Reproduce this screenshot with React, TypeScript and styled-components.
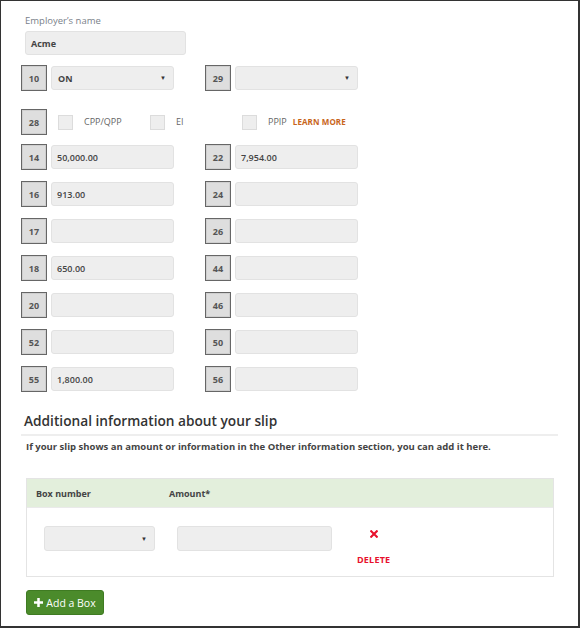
import React from "react";
import styled, { createGlobalStyle } from "styled-components";

const Global = createGlobalStyle`
  html, body { margin: 0; padding: 0; background: #fff; }
  body { font-family: "Open Sans", "Liberation Sans", sans-serif; }
  * { box-sizing: border-box; }
`;

const Page = styled.div`
  width: 580px;
  height: 628px;
  border-style: solid;
  border-color: #333;
  border-width: 1px 2px 2px 1px;
  padding: 13px 20px 0 20px;
  display: flex;
  flex-direction: column;
  overflow: hidden;
`;

const NameBlock = styled.div`
  margin-left: 4px;
  display: flex;
  flex-direction: column;
  gap: 4px;
`;

const NameLabel = styled.label`
  font-size: 9.5px;
  line-height: 13px;
  color: #7a7f8a;
`;

const TextInput = styled.div<{ $w: number; $h?: number; $bold?: boolean }>`
  width: ${(p) => p.$w}px;
  height: ${(p) => p.$h ?? 24}px;
  background: #eeeeee;
  border: 1px solid #e2e2e2;
  border-radius: 3px;
  padding: 0 5px;
  display: flex;
  align-items: center;
  font-size: 9px;
  font-weight: ${(p) => (p.$bold ? 700 : 600)};
  color: #444;
`;

const Select = styled(TextInput)`
  justify-content: space-between;
  padding: 0 7px 0 6px;
  font-weight: 700;
`;

const Caret = styled.span`
  font-size: 6px;
  color: #333;
`;

const Rows = styled.div<{ $top: number }>`
  margin-top: ${(p) => p.$top}px;
  display: flex;
  flex-direction: column;
`;

const Pair = styled.div<{ $gap: number }>`
  display: grid;
  grid-template-columns: 153px 153px;
  column-gap: 31px;
  margin-bottom: ${(p) => p.$gap}px;
`;

const Field = styled.div`
  display: flex;
  align-items: center;
  gap: 4px;
`;

const BoxTag = styled.div`
  width: 26px;
  height: 26px;
  background: #dedede;
  border: 1px solid #666;
  box-shadow: inset 0 0 0 1px #cfcfcf;
  display: flex;
  align-items: center;
  justify-content: center;
  font-size: 9px;
  font-weight: 700;
  color: #555;
  flex-shrink: 0;
`;

const CheckRow = styled.div`
  display: flex;
  align-items: center;
  margin-bottom: 9px;
`;

const CheckGroups = styled.div`
  display: grid;
  grid-template-columns: 92px 92px auto;
  margin-left: 11px;
`;

const CheckGroup = styled.div`
  display: flex;
  align-items: center;
  gap: 11px;
`;

const CheckSquare = styled.span`
  width: 15px;
  height: 15px;
  background: #eeeeee;
  border: 1px solid #dcdcdc;
  display: inline-block;
`;

const CheckLabel = styled.span`
  font-size: 9px;
  color: #666;
  margin-top: -2px;
`;

const LearnMore = styled.span`
  font-size: 8px;
  font-weight: 700;
  color: #c8651b;
  margin-left: -5px;
  margin-top: -2px;
  letter-spacing: 0.1px;
`;

const Heading = styled.h2`
  margin: 19px 0 0 0;
  padding: 0 0 3px 3px;
  border-bottom: 2px solid #eeeeee;
  font-size: 13.7px;
  line-height: 20px;
  font-weight: 600;
  color: #333;
`;

const Intro = styled.p`
  margin: 4px 0 0 5px;
  font-size: 9.5px;
  line-height: 14px;
  font-weight: 700;
  color: #444;
`;

const Table = styled.div`
  margin: 24px 4px 0 5px;
  border: 1px solid #e4e4e4;
`;

const TableHead = styled.div`
  height: 28px;
  background: #e3efdc;
  display: flex;
  align-items: center;
  padding-left: 9px;
  font-size: 9px;
  font-weight: 700;
  color: #444;
`;

const HeadCell = styled.span<{ $w?: number }>`
  width: ${(p) => (p.$w ? `${p.$w}px` : "auto")};
`;

const TableBody = styled.div`
  height: 69px;
  border-top: 1px solid #eaeaea;
  display: flex;
  align-items: flex-start;
  padding: 18px 0 0 17px;
  gap: 22px;
`;

const DeleteCell = styled.div`
  display: flex;
  flex-direction: column;
  align-items: center;
  margin-left: 3px;
  margin-top: 4px;
  gap: 17px;
  color: #e8112d;
`;

const DeleteText = styled.span`
  font-size: 9px;
  line-height: 10px;
  font-weight: 700;
  letter-spacing: 0.2px;
`;

const AddButton = styled.button`
  margin: 13px 0 0 5px;
  width: 78px;
  height: 25px;
  background: #4b8b2b;
  border: 1px solid #3f7b22;
  border-radius: 3px;
  color: #fff;
  font-family: "Open Sans", "Liberation Sans", sans-serif;
  font-size: 10.5px;
  display: flex;
  align-items: center;
  justify-content: center;
  gap: 3px;
  padding: 0;
`;

const PlusIcon = () => (
  <svg width="9" height="9" viewBox="0 0 10 10">
    <path d="M3.6 0h2.8v3.6H10v2.8H6.4V10H3.6V6.4H0V3.6h3.6z" fill="#fff" />
  </svg>
);

const XIcon = () => (
  <svg width="8" height="8" viewBox="0 0 10 10">
    <path d="M1.5 1.5L8.5 8.5M8.5 1.5L1.5 8.5" stroke="#e8112d" strokeWidth="2.6" strokeLinecap="square" />
  </svg>
);

type Box = { n: string; v: string };
const pairs: [Box, Box][] = [
  [{ n: "14", v: "50,000.00" }, { n: "22", v: "7,954.00" }],
  [{ n: "16", v: "913.00" }, { n: "24", v: "" }],
  [{ n: "17", v: "" }, { n: "26", v: "" }],
  [{ n: "18", v: "650.00" }, { n: "44", v: "" }],
  [{ n: "20", v: "" }, { n: "46", v: "" }],
  [{ n: "52", v: "" }, { n: "50", v: "" }],
  [{ n: "55", v: "1,800.00" }, { n: "56", v: "" }],
];

const AmountField = ({ b }: { b: Box }) => (
  <Field>
    <BoxTag>{b.n}</BoxTag>
    <TextInput $w={123}>{b.v}</TextInput>
  </Field>
);

export default function App() {
  return (
    <>
      <Global />
      <Page>
        <NameBlock>
          <NameLabel>Employer’s name</NameLabel>
          <TextInput $w={161} $bold>Acme</TextInput>
        </NameBlock>

        <Rows $top={10}>
          <Pair $gap={18}>
            <Field>
              <BoxTag>10</BoxTag>
              <Select $w={123}>
                <span>ON</span>
                <Caret>▼</Caret>
              </Select>
            </Field>
            <Field>
              <BoxTag>29</BoxTag>
              <Select $w={123}>
                <span />
                <Caret>▼</Caret>
              </Select>
            </Field>
          </Pair>

          <CheckRow>
            <BoxTag>28</BoxTag>
            <CheckGroups>
              <CheckGroup>
                <CheckSquare />
                <CheckLabel>CPP/QPP</CheckLabel>
              </CheckGroup>
              <CheckGroup>
                <CheckSquare />
                <CheckLabel>EI</CheckLabel>
              </CheckGroup>
              <CheckGroup>
                <CheckSquare />
                <CheckLabel>PPIP</CheckLabel>
                <LearnMore>LEARN MORE</LearnMore>
              </CheckGroup>
            </CheckGroups>
          </CheckRow>

          {pairs.map(([a, b], i) => (
            <Pair key={a.n} $gap={i === pairs.length - 1 ? 0 : 11}>
              <AmountField b={a} />
              <AmountField b={b} />
            </Pair>
          ))}
        </Rows>

        <Heading>Additional information about your slip</Heading>
        <Intro>
          If your slip shows an amount or information in the Other information section, you can add it here.
        </Intro>

        <Table>
          <TableHead>
            <HeadCell $w={133}>Box number</HeadCell>
            <HeadCell>Amount*</HeadCell>
          </TableHead>
          <TableBody>
            <Select $w={111} $h={25}>
              <span />
              <Caret>▼</Caret>
            </Select>
            <TextInput $w={155} $h={25} />
            <DeleteCell>
              <XIcon />
              <DeleteText>DELETE</DeleteText>
            </DeleteCell>
          </TableBody>
        </Table>

        <AddButton>
          <PlusIcon />
          <span>Add a Box</span>
        </AddButton>
      </Page>
    </>
  );
}
